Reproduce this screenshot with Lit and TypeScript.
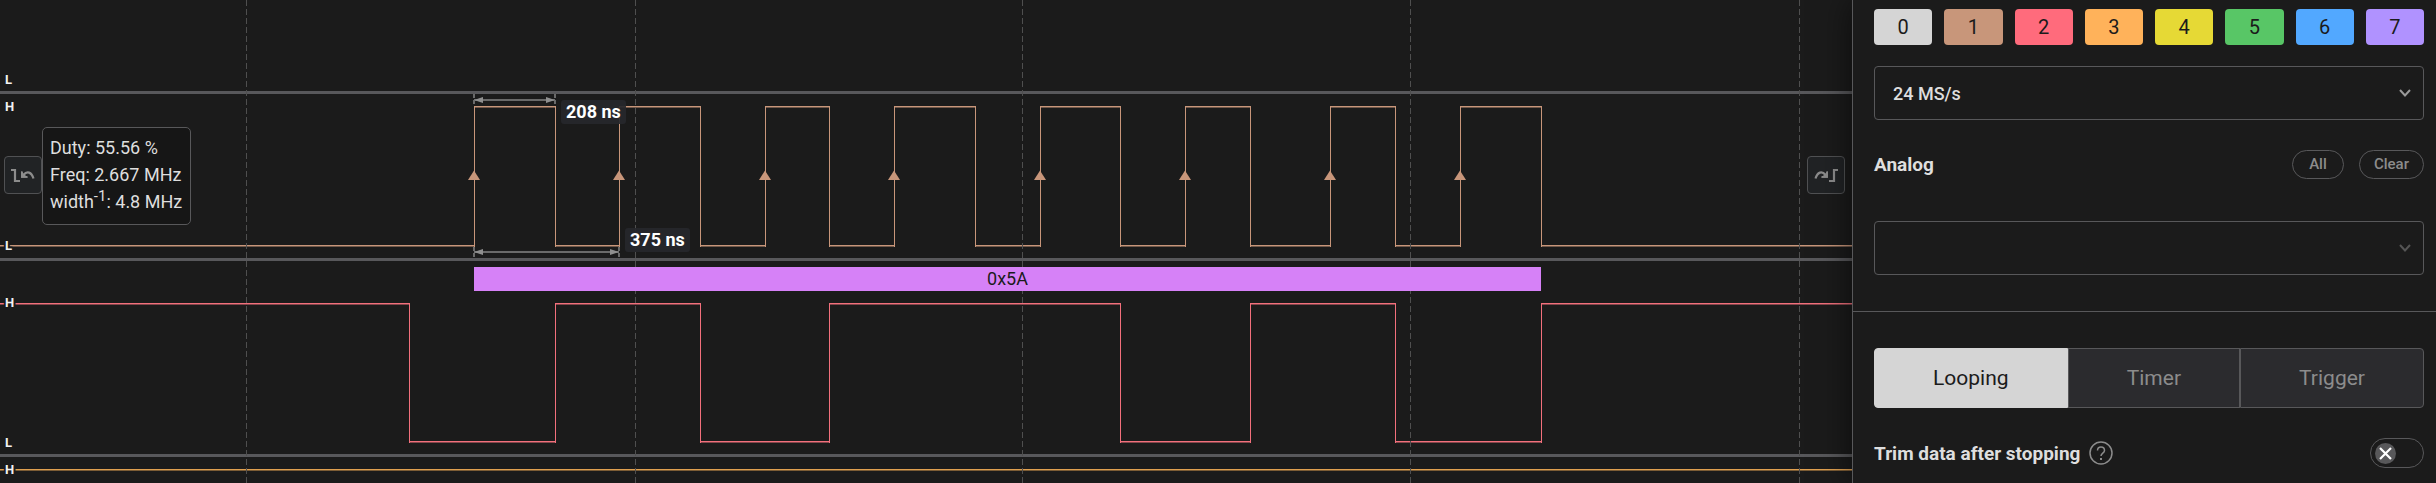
import { LitElement, html, css, svg } from "lit";
import { customElement } from "lit/decorators.js";

type Channel = {
  name: string;
  color: string;
  height: number;
  high?: number;
  low?: number;
  highLabel?: number;
  lowLabel?: number;
  start: boolean;
  edges: number[];
  markers?: boolean;
};

const CHANNELS: Channel[] = [
  { name: "c0", color: "#d5d5d5", height: 94, lowLabel: 84, start: false, edges: [] },
  {
    name: "c1", color: "#c8967a", height: 167, high: 12, low: 151, highLabel: 17, lowLabel: 156, start: false, markers: true,
    edges: [474, 555, 619, 700, 765, 829, 894, 975, 1040, 1120, 1185, 1250, 1330, 1395, 1460, 1541],
  },
  {
    name: "c2", color: "#f2707c", height: 196, high: 42, low: 180, highLabel: 46, lowLabel: 186, start: true,
    edges: [409, 555, 700, 829, 1120, 1250, 1395, 1541],
  },
  { name: "c3", color: "#e0a050", height: 26, high: 12, low: 120, highLabel: 17, start: true, edges: [] },
];

const GRID = [246, 635, 1022, 1410, 1799];
const CHIPS = ["#d5d5d5", "#c8967a", "#ff6b7c", "#ffb25a", "#e6d935", "#58c666", "#52a8ff", "#b092ff"];
const FAR = 8000;

@customElement("channel-trace")
export class ChannelTrace extends LitElement {
  static properties = { channel: { attribute: false } };
  declare channel: Channel;

  static styles = css`
    :host { display: block; }
    .trace { display: block; width: 100%; height: 100%; overflow: hidden; }
    .label {
      font: 700 13px Roboto, sans-serif;
      fill: #f2f2f2;
      stroke: #1b1b1b;
      stroke-width: 4px;
      stroke-linejoin: round;
      paint-order: stroke;
    }
  `;

  private lines() {
    const { high, low, start, edges, color } = this.channel;
    if (high === undefined || low === undefined) return null;
    const yOf = (level: boolean) => (level ? high : low);
    const runs = [];
    let x = 0;
    let level = start;
    for (const edge of [...edges, FAR]) {
      const y = yOf(level);
      runs.push(svg`<rect x=${x} y=${y} width=${edge - x + 1} height="1" fill=${color} />
        <rect x=${x} y=${y + 1} width=${edge - x + 1} height="1" fill=${color} fill-opacity="0.5" />`);
      if (edge !== FAR) runs.push(svg`<rect x=${edge} y=${high} width="1" height=${low - high + 2} fill=${color} />`);
      x = edge;
      level = !level;
    }
    return runs;
  }

  render() {
    const { color, high = 0, low = 0, highLabel, lowLabel, edges, markers } = this.channel;
    const mid = (high + low) / 2;
    return html`
      <svg class="trace" role="img" aria-label="Digital channel">
        ${this.lines()}
        ${markers
          ? edges
              .filter((_, i) => i % 2 === 0)
              .map((x) => svg`<path d="M${x} ${mid - 5} l6 9.5 h-12 z" fill=${color} />`)
          : null}
        ${highLabel === undefined ? null : svg`<text class="label" x="5" y=${highLabel}>H</text>`}
        ${lowLabel === undefined ? null : svg`<text class="label" x="5" y=${lowLabel}>L</text>`}
      </svg>
    `;
  }
}

@customElement("wave-view")
export class WaveView extends LitElement {
  static styles = css`
    :host { display: block; position: relative; overflow: hidden; }
    .rows { display: flex; flex-direction: column; }
    .row { box-sizing: border-box; border-bottom: 3px solid #58585b; }
    .row:last-child { border-bottom: 0; }
    .row > channel-trace { height: 100%; }
    .overlay { position: absolute; inset: 0; width: 100%; height: 100%; pointer-events: none; }
    .grid line { stroke: #4f4f4f; stroke-width: 1px; stroke-dasharray: 6 3; }
    .decoded {
      position: absolute; left: 474px; top: 267px; width: 1067px; height: 24px;
      background: #d681f7; color: #1b1b1b; font-size: 18px; line-height: 24px; text-align: center;
    }
    .span {
      position: absolute; box-sizing: border-box; height: 24px; padding: 0 5px; border-radius: 3px;
      background: rgba(38, 39, 43, 0.92); color: #fff; font-size: 18px; font-weight: 700; line-height: 24px;
    }
    .width { left: 561px; top: 100px; }
    .period { left: 625px; top: 228px; }
    .jump {
      position: absolute; top: 156px; box-sizing: border-box; width: 38px; height: 38px; padding: 0;
      border: 1px solid #505153; border-radius: 4px; background: #212325; color: #8c8c8c;
      display: grid; place-items: center;
    }
    .previous { left: 4px; }
    .next { right: 7px; }
    .jump svg { width: 26px; height: 18px; }
    .tip {
      position: absolute; left: 42px; top: 127px; box-sizing: border-box; padding: 6px 8px 9px 7px;
      border: 1px solid #58585a; border-radius: 5px; background: #161616; color: #dedede;
      font-size: 18px; line-height: 27px; white-space: nowrap;
    }
    .tip sup { font-size: 15px; line-height: 0; }
  `;

  render() {
    return html`
      <div class="rows">
        ${CHANNELS.map(
          (c) => html`<div class="row" style="height:${c.height}px"><channel-trace .channel=${c}></channel-trace></div>`
        )}
      </div>
      <svg class="overlay grid" aria-hidden="true">
        ${GRID.map((x) => svg`<line x1=${x + 0.5} y1="0" x2=${x + 0.5} y2="4000" />`)}
      </svg>
      <svg class="overlay" aria-hidden="true">
        ${this.dimension(474, 555, 100, 94)} ${this.dimension(474, 619, 252, 247)}
      </svg>
      <div class="decoded">0x5A</div>
      <div class="span width">208 ns</div>
      <div class="span period">375 ns</div>
      <button class="jump previous" aria-label="Previous edge">${this.edgeIcon(false)}</button>
      <button class="jump next" aria-label="Next edge">${this.edgeIcon(true)}</button>
      <div class="tip" role="status">
        <div>Duty: 55.56 %</div>
        <div>Freq: 2.667 MHz</div>
        <div>width<sup>-1</sup>: 4.8 MHz</div>
      </div>
    `;
  }

  private edgeIcon(forward: boolean) {
    return html`<svg viewBox="0 0 26 18" fill="none" stroke="currentColor" stroke-width="2.2" aria-hidden="true">
      <g transform=${forward ? "translate(26 0) scale(-1 1)" : "translate(0 0)"}>
        <path d="M1 4h4v11h5" />
        <path d="M13.500 9c3.500-4.500 8-3 10 3.500" />
        <path d="M11 5v6.800h6.800z" fill="currentColor" stroke="none" />
        <path d="M12 5.500v5.300h5.500" stroke-width="1.800" />
      </g>
    </svg>`;
  }

  private dimension(from: number, to: number, y: number, top: number) {
    return svg`
      <g stroke="#6a6a6a" fill="none">
        <path d="M${from} ${y}H${to}" stroke-width="2" />
        <path d="M${from} ${top}v12M${to} ${top}v12" stroke-dasharray="4 2" stroke-width="2" />
      </g>
      <path d="M${from} ${y}l9 -3v6zM${to} ${y}l-9 -3v6z" fill="#8f8f8f" />`;
  }
}

@customElement("capture-panel")
export class CapturePanel extends LitElement {
  static styles = css`
    :host {
      display: block; box-sizing: border-box; border-left: 1px solid #58585a; background: #1b1b1b; color: #dedede;
      box-shadow: 0 0 32px 0 rgba(0, 0, 0, 0.6);
    }
    button, select { font-family: inherit; margin: 0; }
    .digital { display: flex; flex-direction: column; gap: 21px; padding: 9px 12px 0 21px; }
    .chips { display: flex; gap: 12px; }
    .chip { flex: 1; height: 36px; padding: 0; border: 0; border-radius: 4px; color: #1b1b1b; font-size: 20px; }
    .pick { display: grid; align-items: center; }
    .pick > * { grid-area: 1 / 1; }
    .pick select {
      appearance: none; box-sizing: border-box; width: 100%; height: 54px; padding: 0 18px;
      border: 1px solid #58585a; border-radius: 4px; background: transparent; color: #dedede;
      font-size: 18px; font-weight: 500; opacity: 1;
    }
    .pick svg { justify-self: end; width: 12px; height: 10px; margin-right: 13px; color: #9a9a9a; pointer-events: none; }
    .pick.off svg { color: #555; }
    .analog { display: flex; flex-direction: column; gap: 42px; padding: 30px 12px 36px 21px; border-bottom: 1px solid #58585a; }
    .head { display: flex; align-items: center; gap: 15px; }
    h2 { flex: 1; margin: 0; font-size: 19px; font-weight: 700; line-height: 29px; }
    .pill {
      box-sizing: border-box; min-width: 52px; height: 29px; padding: 0 14px 2px; border: 1px solid #58585a;
      border-radius: 15px; background: transparent; color: #8c8c8c; font-size: 15px; font-weight: 500;
    }
    .mode { display: flex; flex-direction: column; gap: 30px; padding: 36px 12px 15px 21px; }
    .tabs { display: flex; }
    .tab {
      flex: 1 1 auto; height: 60px; padding: 0; border: 1px solid #58585a; background: #2b2b2e; color: #8c8c8c; font-size: 21px;
    }
    .tab:first-child { border-radius: 4px 0 0 4px; }
    .tab:last-child { border-radius: 0 4px 4px 0; }
    .tab.on { background: #d5d5d5; border-color: #d5d5d5; color: #1b1b1b; }
    .trim { display: flex; align-items: center; gap: 9px; }
    .trim label { font-size: 19px; font-weight: 700; }
    .help { display: grid; padding: 0; border: 0; background: none; color: #8c8c8c; margin-right: auto; }
    .help svg { width: 24px; height: 24px; }
    .toggle {
      appearance: none; box-sizing: border-box; width: 54px; height: 30px; margin: 0;
      border: 1px solid #58585a; border-radius: 15px;
    }
    .switch { display: grid; align-items: center; }
    .switch > * { grid-area: 1 / 1; }
    .switch svg { width: 21px; height: 21px; margin-left: 5px; pointer-events: none; }
  `;

  private chevron() {
    return html`<svg viewBox="0 0 12 10" fill="none" stroke="currentColor" stroke-width="2" aria-hidden="true"><path d="M1 2l5 5.500 5-5.500" /></svg>`;
  }

  render() {
    return html`
      <div class="digital">
        <div class="chips">
          ${CHIPS.map((c, i) => html`<button class="chip" style="background:${c}">${i}</button>`)}
        </div>
        <div class="pick">
          <select aria-label="Digital sample rate"><option>24 MS/s</option></select>
          ${this.chevron()}
        </div>
      </div>
      <div class="analog">
        <div class="head">
          <h2>Analog</h2>
          <button class="pill">All</button>
          <button class="pill">Clear</button>
        </div>
        <div class="pick off">
          <select aria-label="Analog sample rate" disabled></select>
          ${this.chevron()}
        </div>
      </div>
      <div class="mode">
        <div class="tabs">
          <button class="tab on" aria-pressed="true">Looping</button>
          <button class="tab" aria-pressed="false">Timer</button>
          <button class="tab" aria-pressed="false">Trigger</button>
        </div>
        <div class="trim">
          <label for="trim">Trim data after stopping</label>
          <button class="help" aria-label="Help">
            <svg viewBox="0 0 24 24" fill="none" stroke="currentColor" stroke-width="1.500">
              <circle cx="12" cy="12" r="11" />
              <path d="M8.500 9.500c0-4.700 7-4.700 7 0 0 2.600-3.500 2.800-3.500 5.500" />
              <path d="M12 17v2" stroke-width="2" />
            </svg>
          </button>
          <div class="switch">
            <input class="toggle" type="checkbox" role="switch" id="trim" />
            <svg viewBox="0 0 21 21" aria-hidden="true">
              <circle cx="10.500" cy="10.500" r="10.500" fill="#58585a" />
              <path d="M5 5l11 11M16 5l-11 11" stroke="#fff" stroke-width="2.200" />
            </svg>
          </div>
        </div>
      </div>
    `;
  }
}

@customElement("app-root")
export class AppRoot extends LitElement {
  static styles = css`
    :host {
      display: grid; grid-template-columns: minmax(0, 1fr) 584px; min-height: 100vh; overflow: hidden;
      background: #1b1b1b; font-family: Roboto, "Liberation Sans", sans-serif;
    }
    capture-panel { position: relative; }
  `;

  render() {
    return html`<wave-view></wave-view><capture-panel></capture-panel>`;
  }
}
